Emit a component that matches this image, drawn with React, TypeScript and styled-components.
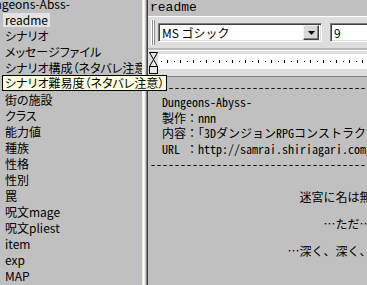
import React from 'react';
import styled, { createGlobalStyle } from 'styled-components';

const uiFont = `"Noto Sans CJK JP", "Noto Sans", sans-serif`;
const monoFont = `"Noto Sans Mono CJK JP", "Noto Sans CJK JP", "Liberation Mono", monospace`;

const GlobalStyle = createGlobalStyle`
    html, body {
        margin: 0;
        padding: 0;
        background: #c0c0c0;
        overflow: hidden;
    }
`;

const Window = styled.div`
    position: relative;
    display: flex;
    width: 367px;
    height: 285px;
    overflow: hidden;
    background: #c0c0c0;
    color: #000;
`;

const TreePane = styled.div`
    width: 142px;
    flex: none;
    overflow: hidden;
`;

const TreeList = styled.ul`
    margin: -4px 0 0;
    padding: 0;
    list-style: none;
    font: 12px/16px ${uiFont};
    font-feature-settings: "palt";
`;

const TreeItem = styled.li<{ $root?: boolean }>`
    height: 16px;
    white-space: nowrap;
    margin-left: ${p => (p.$root ? '-23px' : '3px')};
`;

const TreeLabel = styled.span<{ $selected?: boolean }>`
    display: inline-block;
    padding: 0 2px;
    margin-top: 1px;
    line-height: 14px;
    background: ${p => (p.$selected ? '#e2e2e2' : 'transparent')};
`;

const Splitter = styled.div`
    width: 6px;
    flex: none;
    background: linear-gradient(
        to right,
        #ecebdc 0 1px,
        #ffffff 1px 2px,
        #f0f0f0 2px 3px,
        #c8c8d0 3px 4px,
        #808080 4px 5px,
        #404040 5px 6px
    );
`;

const RightPane = styled.div`
    flex: 1;
    min-width: 0;
    display: flex;
    flex-direction: column;
    overflow: hidden;
`;

const Header = styled.div`
    height: 16px;
    flex: none;
    padding-left: 2px;
    font: 13px/15px "Liberation Mono", monospace;
    white-space: nowrap;
`;

const Toolbar = styled.div`
    height: 31px;
    flex: none;
    display: flex;
    align-items: center;
    background: #dedede;
    border-top: 1px solid #ffffff;
    border-bottom: 2px solid #b8b8b8;
`;

const Grip = styled.div`
    width: 2px;
    height: 25px;
    margin-left: 3px;
    border-left: 1px solid #ffffff;
    border-right: 1px solid #909090;
    & + & {
        margin-left: 0;
    }
`;

const Field = styled.div<{ $width: number }>`
    width: ${p => p.$width}px;
    height: 19px;
    box-sizing: border-box;
    flex: none;
    display: flex;
    align-items: center;
    background: #fff;
    border: 1px solid;
    border-color: #808080 #ffffff #ffffff #808080;
    box-shadow: inset 1px 1px #404040, inset -1px -1px #dcdcdc;
    padding: 0 2px 0 3px;
    font: 12px/15px ${uiFont};
    white-space: nowrap;
`;

const ComboField = styled(Field)`
    margin-left: 3px;
`;

const SizeField = styled(Field)`
    margin-left: 8px;
`;

const ComboText = styled.span`
    flex: 1;
`;

const DropButton = styled.div`
    width: 16px;
    height: 15px;
    box-sizing: border-box;
    display: flex;
    align-items: center;
    justify-content: center;
    background: #d8d8d8;
    border: 1px solid;
    border-color: #f0f0f0 #404040 #404040 #f0f0f0;
    box-shadow: inset -1px -1px #808080;
`;

const Ruler = styled.div`
    height: 25px;
    flex: none;
    display: flex;
    align-items: flex-start;
    background: #dedede;
    border-top: 1px solid #ffffff;
    border-bottom: 1px solid #808080;
`;

const IndentMarker = styled.svg`
    flex: none;
    margin: 1px 0 0 1px;
`;

const RulerStrip = styled.svg`
    flex: 1;
    height: 15px;
    margin-top: 3px;
    background: #fff;
`;

const Doc = styled.div`
    flex: 1;
    padding: 2px 0 0 2px;
    font: 12px ${monoFont};
    white-space: pre;
    overflow: hidden;
`;

const DocLine = styled.div`
    height: 15.4px;
    line-height: 15.4px;
`;

const CenterBlock = styled.div`
    width: 395px;
    margin-top: 19px;
    text-align: center;
    line-height: 13.5px;
`;

const CenterLine = styled.div`
    height: 13.5px;
`;

const Tooltip = styled.div`
    position: absolute;
    left: 2px;
    top: 75px;
    height: 14px;
    padding: 0 2px;
    background: #ffffe1;
    border: 1px solid #000;
    font: 12px/14px ${uiFont};
    font-feature-settings: "palt";
    white-space: nowrap;
`;

const treeItems = [
    'readme',
    'シナリオ',
    'メッセージファイル',
    'シナリオ構成（ネタバレ注意）',
    'シナリオ難易度（ネタバレ注意）',
    '街の施設',
    'クラス',
    '能力値',
    '種族',
    '性格',
    '性別',
    '罠',
    '呪文mage',
    '呪文pliest',
    'item',
    'exp',
    'MAP',
];

const dashes = '-'.repeat(60);

const docLines = [
    dashes,
    '  Dungeons-Abyss-',
    '  製作：nnn',
    '  内容：「3DダンジョンRPGコンストラクションツール」',
    '  URL ：http://samrai.shiriagari.com/',
    dashes,
];

const storyLines = ['迷宮に名は無い。', '', '…ただ…', '', '…深く、深く、深く…'];

const Ticks: React.FC = () => {
    const ticks = [];
    for (let i = 0; i < 34; i++) {
        const x = 2.5 + i * 6.5;
        ticks.push(
            i % 2 === 0
                ? <rect key={i} x={Math.round(x)} y={7} width={1} height={1} fill="#000" />
                : <rect key={i} x={Math.round(x)} y={6} width={1} height={3} fill="#000" />
        );
    }
    return <>{ticks}</>;
};

const App: React.FC = () => {
    return (
        <Window>
            <GlobalStyle />
            <TreePane>
                <TreeList>
                    <TreeItem $root><TreeLabel>Dungeons-Abss-</TreeLabel></TreeItem>
                    {treeItems.map((name, i) => (
                        <TreeItem key={name}>
                            <TreeLabel $selected={i === 0}>{name}</TreeLabel>
                        </TreeItem>
                    ))}
                </TreeList>
            </TreePane>
            <Splitter />
            <RightPane>
                <Header>readme</Header>
                <Toolbar>
                    <Grip />
                    <Grip />
                    <ComboField $width={164}>
                        <ComboText>MS ゴシック</ComboText>
                        <DropButton>
                            <svg width="7" height="4" viewBox="0 0 7 4">
                                <path d="M0 0h7L3.5 4z" fill="#000" />
                            </svg>
                        </DropButton>
                    </ComboField>
                    <SizeField $width={44}>9</SizeField>
                </Toolbar>
                <Ruler>
                    <IndentMarker width="9" height="23" viewBox="0 0 9 23">
                        <path d="M0.5 0.5h8L4.5 7.5z" fill="#e8e8e8" stroke="#000" />
                        <path d="M4.5 7.5L8.5 14.5h-8z" fill="#e8e8e8" stroke="#000" />
                        <rect x="0.5" y="14.5" width="8" height="7" fill="#e8e8e8" stroke="#000" />
                    </IndentMarker>
                    <RulerStrip height="15">
                        <Ticks />
                    </RulerStrip>
                </Ruler>
                <Doc>
                    {docLines.map((line, i) => (
                        <DocLine key={i}>{line}</DocLine>
                    ))}
                    <CenterBlock>
                        {storyLines.map((line, i) => (
                            <CenterLine key={i}>{line}</CenterLine>
                        ))}
                    </CenterBlock>
                </Doc>
            </RightPane>
            <Tooltip>シナリオ難易度（ネタバレ注意）</Tooltip>
        </Window>
    );
};

export default App;
